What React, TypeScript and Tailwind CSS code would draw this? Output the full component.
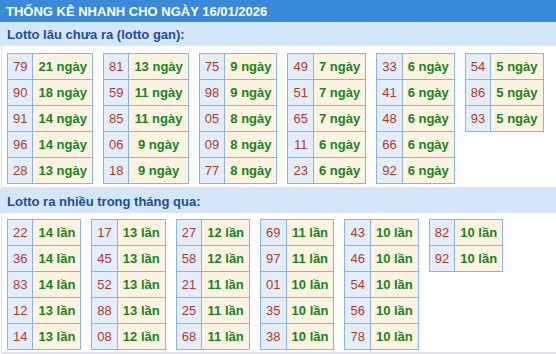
import React from "react";

type Row = [string, number];

const gan: Row[][] = [
  [["79", 21], ["90", 18], ["91", 14], ["96", 14], ["28", 13]],
  [["81", 13], ["59", 11], ["85", 11], ["06", 9], ["18", 9]],
  [["75", 9], ["98", 9], ["05", 8], ["09", 8], ["77", 8]],
  [["49", 7], ["51", 7], ["65", 7], ["11", 6], ["23", 6]],
  [["33", 6], ["41", 6], ["48", 6], ["66", 6], ["92", 6]],
  [["54", 5], ["86", 5], ["93", 5]],
];

const nhieu: Row[][] = [
  [["22", 14], ["36", 14], ["83", 14], ["12", 13], ["14", 13]],
  [["17", 13], ["45", 13], ["52", 13], ["88", 13], ["08", 12]],
  [["27", 12], ["58", 12], ["21", 11], ["25", 11], ["68", 11]],
  [["69", 11], ["97", 11], ["01", 10], ["35", 10], ["38", 10]],
  [["43", 10], ["46", 10], ["54", 10], ["56", 10], ["78", 10]],
  [["82", 10], ["92", 10]],
];

function LotoTable({ rows, unit }: { rows: Row[]; unit: string }) {
  return (
    <table className="border-collapse border border-[#8ab2f2]">
      <tbody>
        {rows.map(([num, count]) => (
          <tr key={num} className="h-[26px]">
            <td className="border border-[#8ab2f2] bg-[#e2eefd] px-[5px] text-center text-[13px] text-[#b8391b]">
              {num}
            </td>
            <td className="border border-[#8ab2f2] bg-[#fdf3e2] px-[5px] text-center text-[13px] font-bold text-[#15861a]">
              {count} {unit}
            </td>
          </tr>
        ))}
      </tbody>
    </table>
  );
}

function Section({ title, tables, unit, top, bottom }: { title: string; tables: Row[][]; unit: string; top: string; bottom: string }) {
  return (
    <div>
      <div className="flex h-[24px] items-center bg-[#d4e6fa] px-[7px] text-[13px] font-bold text-[#1c4d9e]">
        {title}
      </div>
      <div className={`ml-px flex flex-wrap items-start gap-x-[10px] border-b-2 border-l border-[#e2e4ea] pl-[5px] ${top} ${bottom}`}>
        {tables.map((rows, i) => (
          <LotoTable key={i} rows={rows} unit={unit} />
        ))}
      </div>
    </div>
  );
}

export default function App() {
  return (
    <div className="w-[556px] bg-white font-['Liberation_Sans',Arial,sans-serif] leading-none">
      <div className="flex h-[22px] items-center bg-[#3b8ad9] px-[6px] text-[13px] font-bold text-white">
        THỐNG KÊ NHANH CHO NGÀY 16/01/2026
      </div>
      <Section title="Lotto lâu chưa ra (lotto gan):" tables={gan} unit="ngày" top="pt-[7px]" bottom="pb-[3px]" />
      <Section title="Lotto ra nhiều trong tháng qua:" tables={nhieu} unit="lần" top="pt-[6px]" bottom="pb-[2px]" />
    </div>
  );
}
